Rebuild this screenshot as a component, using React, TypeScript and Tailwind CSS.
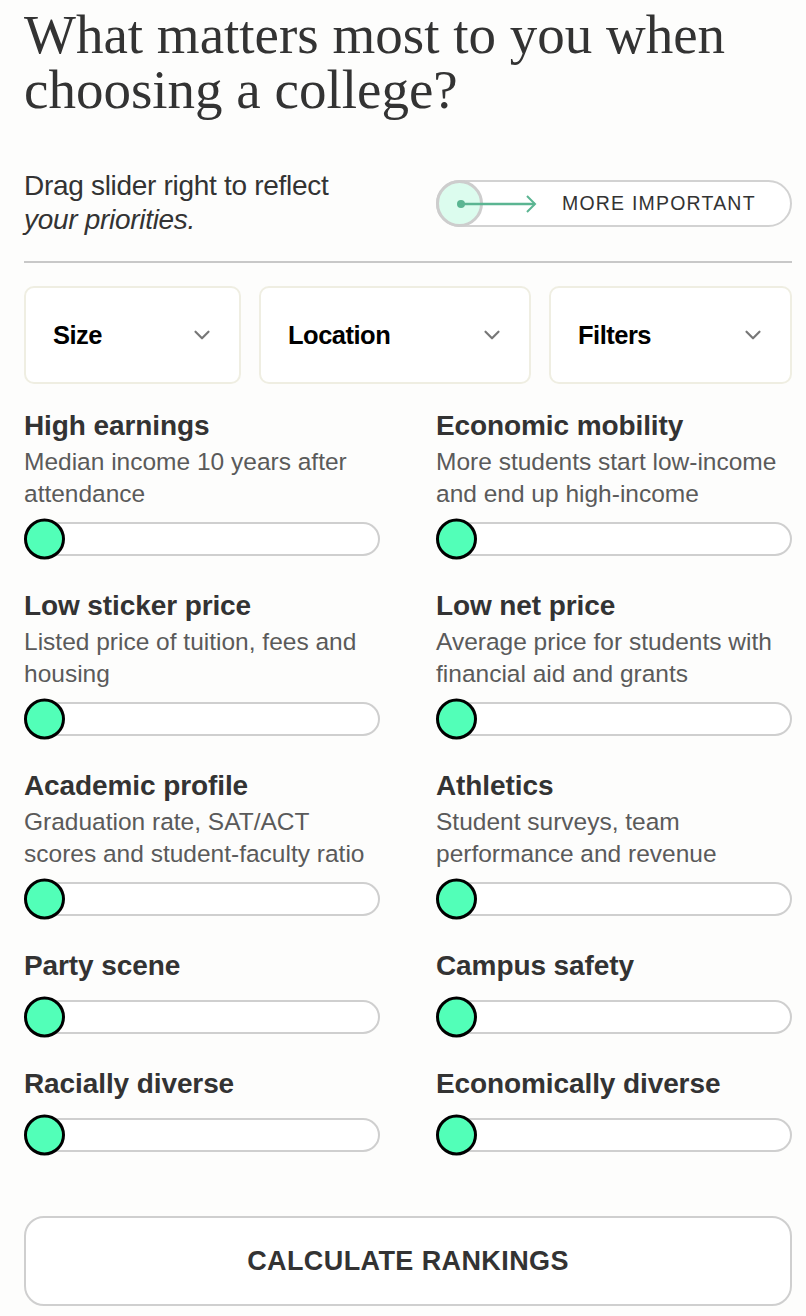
import { ChevronDown } from "lucide-react";

type Priority = {
  title: string;
  desc?: string;
};

const rows: [Priority, Priority][] = [
  [
    { title: "High earnings", desc: "Median income 10 years after attendance" },
    { title: "Economic mobility", desc: "More students start low-income and end up high-income" },
  ],
  [
    { title: "Low sticker price", desc: "Listed price of tuition, fees and housing" },
    { title: "Low net price", desc: "Average price for students with financial aid and grants" },
  ],
  [
    { title: "Academic profile", desc: "Graduation rate, SAT/ACT scores and student-faculty ratio" },
    { title: "Athletics", desc: "Student surveys, team performance and revenue" },
  ],
  [{ title: "Party scene" }, { title: "Campus safety" }],
  [{ title: "Racially diverse" }, { title: "Economically diverse" }],
];

const sans = "font-['Liberation_Sans',Arial,sans-serif]";

function Slider() {
  return (
    <div className="relative h-[34px] w-full rounded-full border-2 border-[#cfcfcf] bg-white">
      <div className="absolute -left-[2px] top-1/2 h-[41px] w-[41px] -translate-y-1/2 rounded-full border-[3px] border-black bg-[#52ffb8]" />
    </div>
  );
}

function PriorityItem({ item }: { item: Priority }) {
  return (
    <div className="flex flex-col">
      <h3 className={`${sans} text-[28px] font-bold leading-[34px] tracking-[-0.1px] text-[#333]`}>
        {item.title}
      </h3>
      {item.desc && (
        <p className={`${sans} mt-[3px] text-[24.5px] leading-[32px] text-[#5a5a5a]`}>{item.desc}</p>
      )}
      <div className={item.desc ? "mt-[12px]" : "mt-[17px]"}>
        <Slider />
      </div>
    </div>
  );
}

function Dropdown({ label, className }: { label: string; className: string }) {
  return (
    <button
      className={`${className} flex h-[98px] items-center justify-between rounded-[10px] border-2 border-[#efeee2] bg-white pl-[27px] pr-[24px]`}
    >
      <span className={`${sans} text-[25.5px] font-bold tracking-[-0.5px] text-black`}>{label}</span>
      <ChevronDown className="h-[26px] w-[26px] text-[#777]" strokeWidth={2} />
    </button>
  );
}

export default function App() {
  return (
    <div className="min-h-[1316px] w-[806px] bg-[#fdfdfc] pl-[24px] pr-[14px] pt-[7px] text-[#333]">
      <h1 className="font-['Liberation_Serif','Times_New_Roman',serif] text-[55px] leading-[55px] text-[#333]">
        What matters most to you when choosing a college?
      </h1>

      <div className="mt-[52px] flex items-start justify-between">
        <p className={`${sans} text-[28px] leading-[34px] tracking-[-0.3px] text-[#333]`}>
          Drag slider right to reflect
          <br />
          <em>your priorities.</em>
        </p>
        <div className="mt-[11px] flex h-[47px] w-[356px] items-center rounded-full border-2 border-[#d2d2d2] bg-white">
          <div className="relative -ml-[2px] flex h-[47px] w-[47px] shrink-0 items-center justify-center rounded-full border-[3px] border-[#cdcdcd] bg-[#dcfcee]">
            <svg
              className="absolute left-[18px] top-1/2 -translate-y-1/2 overflow-visible"
              width="82"
              height="20"
              viewBox="0 0 82 20"
              fill="none"
            >
              <circle cx="4" cy="10" r="4" fill="#5bb592" />
              <line x1="4" y1="10" x2="78" y2="10" stroke="#5bb592" strokeWidth="2.5" />
              <polyline points="70,2 78,10 70,18" stroke="#5bb592" strokeWidth="2" fill="none" />
            </svg>
          </div>
          <span className={`${sans} ml-[79px] text-[19.5px] tracking-[1.2px] text-[#333]`}>
            MORE IMPORTANT
          </span>
        </div>
      </div>

      <div className="mt-[24px] h-[2px] w-full bg-[#c8c8c8]" />

      <div className="mt-[23px] flex gap-[18px]">
        <Dropdown label="Size" className="w-[217px]" />
        <Dropdown label="Location" className="w-[272px]" />
        <Dropdown label="Filters" className="flex-1" />
      </div>

      <div className="mt-[25px] flex flex-col gap-[33px]">
        {rows.map((row, i) => (
          <div key={i} className="grid grid-cols-[356px_356px] gap-x-[56px]">
            <PriorityItem item={row[0]} />
            <PriorityItem item={row[1]} />
          </div>
        ))}
      </div>

      <button
        className={`${sans} mt-[64px] flex h-[90px] w-full items-center justify-center rounded-[20px] border-2 border-[#cfcfcf] bg-white text-[27px] font-bold tracking-[0.4px] text-[#333]`}
      >
        CALCULATE RANKINGS
      </button>
    </div>
  );
}
